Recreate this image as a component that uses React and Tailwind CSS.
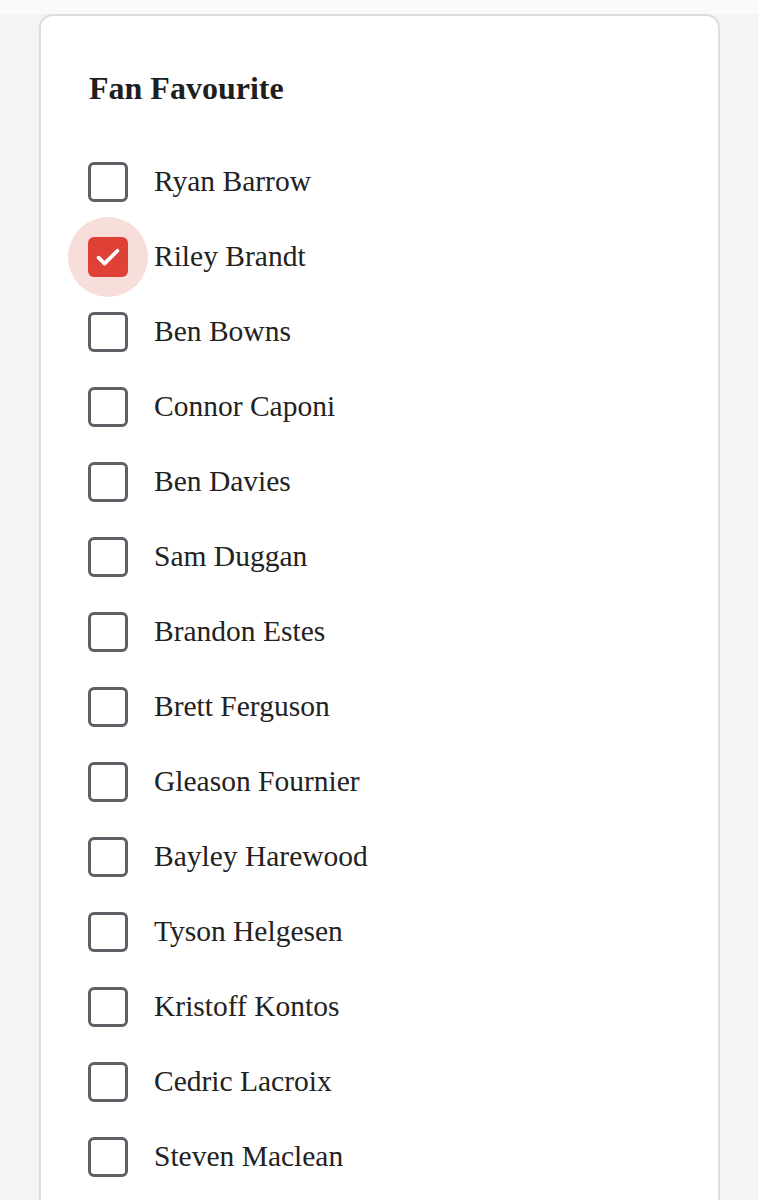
import React from "react";

const names = [
  "Ryan Barrow",
  "Riley Brandt",
  "Ben Bowns",
  "Connor Caponi",
  "Ben Davies",
  "Sam Duggan",
  "Brandon Estes",
  "Brett Ferguson",
  "Gleason Fournier",
  "Bayley Harewood",
  "Tyson Helgesen",
  "Kristoff Kontos",
  "Cedric Lacroix",
  "Steven Maclean",
];

function Box({ checked }) {
  return (
    <div className="relative w-[40px] h-[40px] shrink-0">
      {checked && (
        <div className="absolute left-[-20px] top-[-20px] w-[80px] h-[80px] rounded-full bg-[#f8dedb]" />
      )}
      {checked ? (
        <div className="relative w-[40px] h-[40px] rounded-[6px] bg-[#df4137] flex items-center justify-center">
          <svg width="30" height="30" viewBox="0 0 24 24" fill="none">
            <path d="M4.5 12.5l4.8 4.8L19.5 7" stroke="white" strokeWidth="3" strokeLinecap="round" strokeLinejoin="round" />
          </svg>
        </div>
      ) : (
        <div className="relative w-[40px] h-[40px] rounded-[6px] border-[3px] border-[#5f6066] bg-white" />
      )}
    </div>
  );
}

export default function App() {
  return (
    <div className="h-[1200px] bg-[#f4f4f4] overflow-hidden" style={{ fontFamily: '"Liberation Serif", "Times New Roman", serif' }}>
      <div className="h-[14px] bg-[#fafafa]" />
      <div className="ml-[39px] w-[681px] bg-white border-2 border-[#dcdcdc] rounded-[14px] pl-[47px] pt-[54px] pb-[40px]">
        <h2 className="text-[32px] leading-[36px] font-bold text-[#1f1f1f] pl-[1px]">Fan Favourite</h2>
        <div className="mt-[38px] flex flex-col">
          {names.map((n, i) => (
            <label key={n} className="h-[75px] flex items-center gap-[26px]">
              <Box checked={i === 1} />
              <span className="text-[29.5px] text-[#222] leading-none">{n}</span>
            </label>
          ))}
        </div>
      </div>
    </div>
  );
}
